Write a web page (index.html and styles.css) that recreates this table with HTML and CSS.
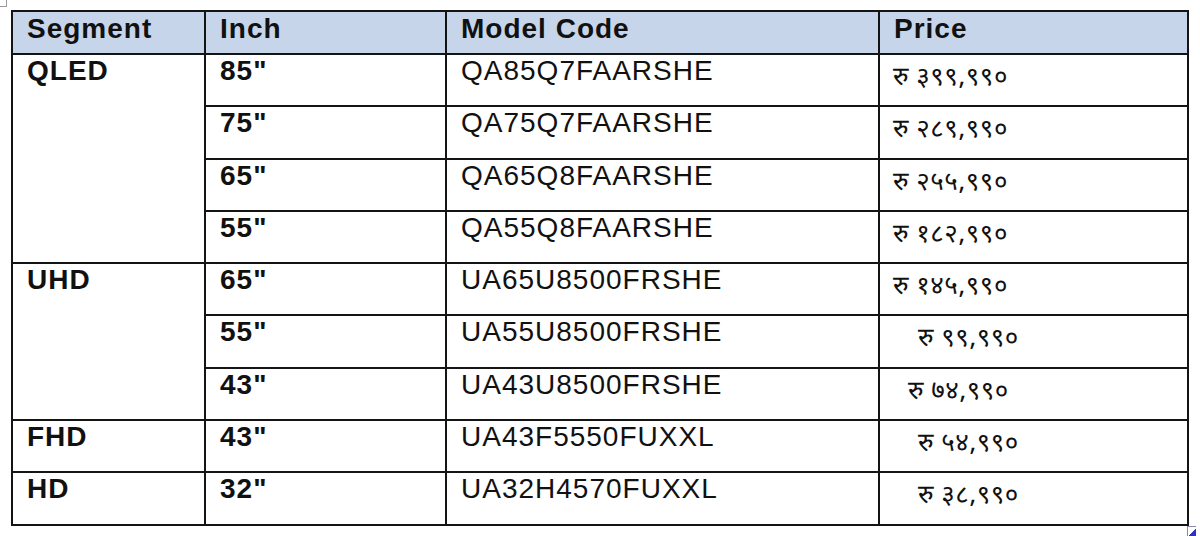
FILE: index.html
```html
<!DOCTYPE html>
<html>
<head>
<meta charset="utf-8">
<link rel="stylesheet" href="styles.css">
</head>
<body>
<div class="page">
  <span class="handle-tl"></span>
  <table class="price-table">
    <colgroup>
      <col class="c-seg"><col class="c-inch"><col class="c-model"><col class="c-price">
    </colgroup>
    <thead>
      <tr class="head">
        <th>Segment</th><th>Inch</th><th>Model Code</th><th>Price</th>
      </tr>
    </thead>
    <tbody>
      <tr><td class="seg" rowspan="4">QLED</td><td class="inch">85"</td><td>QA85Q7FAARSHE</td><td class="price">रु ३९९,९९०</td></tr>
      <tr><td class="inch">75"</td><td>QA75Q7FAARSHE</td><td class="price">रु २८९,९९०</td></tr>
      <tr><td class="inch">65"</td><td>QA65Q8FAARSHE</td><td class="price">रु २५५,९९०</td></tr>
      <tr><td class="inch">55"</td><td>QA55Q8FAARSHE</td><td class="price">रु १८२,९९०</td></tr>
      <tr><td class="seg" rowspan="3">UHD</td><td class="inch">65"</td><td>UA65U8500FRSHE</td><td class="price">रु १४५,९९०</td></tr>
      <tr><td class="inch">55"</td><td>UA55U8500FRSHE</td><td class="price ind-lg">रु ९९,९९०</td></tr>
      <tr><td class="inch">43"</td><td>UA43U8500FRSHE</td><td class="price ind-md">रु ७४,९९०</td></tr>
      <tr><td class="seg">FHD</td><td class="inch">43"</td><td>UA43F5550FUXXL</td><td class="price ind-lg">रु ५४,९९०</td></tr>
      <tr><td class="seg">HD</td><td class="inch">32"</td><td>UA32H4570FUXXL</td><td class="price ind-lg">रु ३८,९९०</td></tr>
    </tbody>
  </table>
  <span class="handle-br"></span>
</div>
</body>
</html>
```

FILE: styles.css
```css
html, body {
  margin: 0;
  padding: 0;
  background: #ffffff;
}
.page {
  position: relative;
  width: 1200px;
  height: 536px;
  padding: 10px 0 0 11px;
  box-sizing: border-box;
  font-family: "Liberation Sans", Arial, sans-serif;
  color: #111;
}
.price-table {
  border-collapse: collapse;
  table-layout: fixed;
  width: 1176px;
}
.c-seg { width: 193px; }
.c-inch { width: 241px; }
.c-model { width: 433px; }
.c-price { width: 309px; }

.price-table th,
.price-table td {
  border: 2px solid #141414;
  vertical-align: top;
  text-align: left;
  padding: 0 13px 0 14px;
  font-size: 28px;
  line-height: 32px;
  letter-spacing: 1px;
  white-space: nowrap;
}
.head th {
  height: 43px;
  box-sizing: border-box;
  background: #c7d5eb;
  font-weight: bold;
  padding-top: 1px;
}
.price-table tbody tr {
  height: 52.3px;
}
.seg, .inch {
  font-weight: bold;
}
.price-table td.price {
  font-family: "Noto Sans Devanagari", "Lohit Devanagari", "Mangal", "Noto Sans", sans-serif;
  font-size: 26px;
  line-height: 32px;
  letter-spacing: 0.5px;
  padding-top: 8px;
  padding-left: 13px;
}
.price-table td.ind-lg { padding-left: 38px; }
.price-table td.ind-md { padding-left: 28px; }

.handle-tl {
  position: absolute;
  left: 0;
  top: 0;
  width: 6px;
  height: 6px;
  border-right: 1px solid #9a9a9a;
  border-bottom: 1px solid #9a9a9a;
}
.handle-br {
  position: absolute;
  left: 1187px;
  top: 526px;
  width: 8px;
  height: 9px;
  border-left: 1px solid #8a8aa8;
  border-top: 1px solid #8a8aa8;
  background: linear-gradient(135deg, #ffffff 55%, #3030c0 56%);
}
```
